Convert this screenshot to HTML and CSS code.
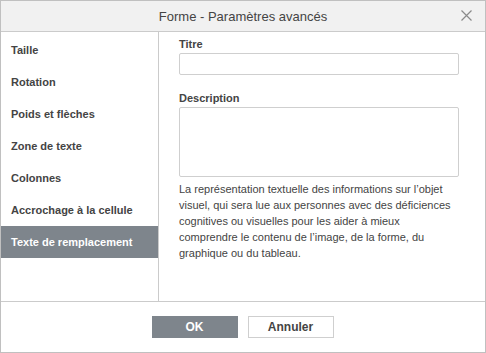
FILE: index.html
```html
<!DOCTYPE html>
<html lang="fr">
<head>
<meta charset="utf-8">
<title>Forme - Paramètres avancés</title>
<link rel="stylesheet" href="styles.css">
</head>
<body>
<div class="dialog">
  <div class="header">
    <span class="title">Forme - Paramètres avancés</span>
    <svg class="close" width="11" height="11" viewBox="0 0 11 11"><path d="M0.5 0.5L10.5 10.5M10.5 0.5L0.5 10.5" stroke="#8a8a8a" stroke-width="1.2" fill="none"/></svg>
  </div>
  <div class="body">
    <div class="sidebar">
      <div class="item">Taille</div>
      <div class="item">Rotation</div>
      <div class="item">Poids et flèches</div>
      <div class="item">Zone de texte</div>
      <div class="item">Colonnes</div>
      <div class="item">Accrochage à la cellule</div>
      <div class="item selected">Texte de remplacement</div>
    </div>
    <div class="content">
      <div class="label">Titre</div>
      <div class="input"></div>
      <div class="label label-desc">Description</div>
      <div class="textarea"></div>
      <p class="help">La représentation textuelle des informations sur l’objet visuel, qui sera lue aux personnes avec des déficiences cognitives ou visuelles pour les aider à mieux comprendre le contenu de l’image, de la forme, du graphique ou du tableau.</p>
    </div>
  </div>
  <div class="footer">
    <div class="btn primary">OK</div>
    <div class="btn">Annuler</div>
  </div>
</div>
</body>
</html>
```

FILE: styles.css
```css
* { box-sizing: border-box; }
html, body { margin: 0; padding: 0; background: #fff; }
body { font-family: "Liberation Sans", Arial, sans-serif; color: #444; }
.dialog {
  width: 486px;
  height: 353px;
  border: 1px solid #c0c0c0;
  display: flex;
  flex-direction: column;
  background: #fff;
}
.header {
  height: 31px;
  flex: none;
  background: #f1f1f1;
  border-bottom: 1px solid #cbcbcb;
  display: flex;
  align-items: center;
  justify-content: center;
  position: relative;
}
.title { font-size: 13px; color: #444; }
.close { position: absolute; right: 13px; top: 9px; }
.body {
  flex: 1;
  display: flex;
  border-bottom: 1px solid #cbcbcb;
}
.sidebar {
  width: 158px;
  flex: none;
  border-right: 1px solid #cbcbcb;
  padding-top: 2px;
}
.item {
  height: 32px;
  line-height: 32px;
  padding-left: 10px;
  font-size: 11px;
  font-weight: bold;
  color: #444;
}
.item.selected { background: #7e858c; color: #fff; }
.content { flex: 1; padding: 5px 0 0 20px; }
.label { font-size: 11px; font-weight: bold; line-height: 14px; height: 14px; }
.input {
  margin-top: 2px;
  width: 280px;
  height: 22px;
  border: 1px solid #cfcfcf;
  border-radius: 2px;
}
.label-desc { margin-top: 16px; }
.textarea {
  margin-top: 2px;
  width: 280px;
  height: 70px;
  border: 1px solid #cfcfcf;
  border-radius: 2px;
}
.help {
  margin: 4px 0 0;
  width: 280px;
  font-size: 11px;
  line-height: 16px;
}
.footer {
  height: 50px;
  flex: none;
  display: flex;
  justify-content: center;
  align-items: flex-start;
  gap: 10px;
  padding: 14px 1px 0 0;
}
.btn {
  width: 86px;
  height: 22px;
  border: 1px solid #cfcfcf;
  font-size: 12px;
  font-weight: bold;
  line-height: 20px;
  text-align: center;
  color: #444;
}
.btn.primary { background: #7e858c; border-color: #7e858c; color: #fff; }
```
